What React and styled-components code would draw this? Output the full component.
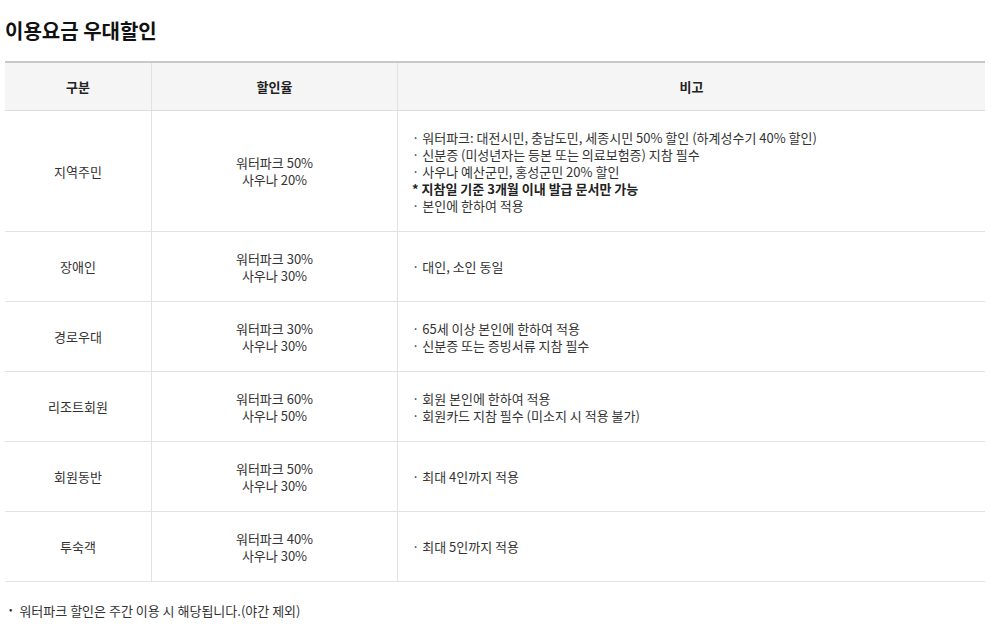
import React from "react";
import styled, { createGlobalStyle } from "styled-components";

const Global = createGlobalStyle`
  html, body { margin:0; padding:0; background:#fff; }
  body { font-family: "Noto Sans CJK KR", "Noto Sans", sans-serif; color:#333; }
`;

const Page = styled.div`
  padding: 15px 6px 0 5px;
`;

const Title = styled.h2`
  margin: 0 0 14px 0;
  font-size: 20px;
  font-weight: 700;
  color: #111;
  line-height: 32px;
`;

const Table = styled.table`
  width: 980px;
  border-collapse: collapse;
  border-top: 2px solid #c8c8c8;
  font-size: 13px;
  line-height: 17px;
`;

const Th = styled.th`
  background: #f5f5f5;
  height: 47px;
  font-weight: 700;
  color: #222;
  border-bottom: 1px solid #ddd;
  border-left: ${(p) => (p.first ? "none" : "1px solid #e2e2e2")};
  width: ${(p) => p.w || "auto"};
  padding: 0;
`;

const Td = styled.td`
  text-align: ${(p) => (p.left ? "left" : "center")};
  padding: ${(p) => (p.left ? "17.5px 14px" : "17.5px 0")};
  border-bottom: 1px solid #e2e2e2;
  border-left: ${(p) => (p.first ? "none" : "1px solid #e2e2e2")};
  color: #333;
  vertical-align: middle;
`;

const Line = styled.div`
  font-weight: ${(p) => (p.bold ? 700 : 400)};
  color: ${(p) => (p.bold ? "#222" : "#333")};
`;

const Note = styled.p`
  margin: 19px 0 0 4px;
  font-size: 13px;
  color: #333;
  display: flex;
  gap: 7px;
`;

const Dot = styled.span`
  font-size: 10px;
`;

const rows = [
  {
    name: "지역주민",
    rate: ["워터파크 50%", "사우나 20%"],
    notes: [
      ["· 워터파크: 대전시민, 충남도민, 세종시민 50% 할인 (하계성수기 40% 할인)"],
      ["· 신분증 (미성년자는 등본 또는 의료보험증) 지참 필수"],
      ["· 사우나 예산군민, 홍성군민 20% 할인"],
      ["* 지참일 기준 3개월 이내 발급 문서만 가능", true],
      ["· 본인에 한하여 적용"],
    ],
  },
  { name: "장애인", rate: ["워터파크 30%", "사우나 30%"], notes: [["· 대인, 소인 동일"]] },
  {
    name: "경로우대",
    rate: ["워터파크 30%", "사우나 30%"],
    notes: [["· 65세 이상 본인에 한하여 적용"], ["· 신분증 또는 증빙서류 지참 필수"]],
  },
  {
    name: "리조트회원",
    rate: ["워터파크 60%", "사우나 50%"],
    notes: [["· 회원 본인에 한하여 적용"], ["· 회원카드 지참 필수 (미소지 시 적용 불가)"]],
  },
  { name: "회원동반", rate: ["워터파크 50%", "사우나 30%"], notes: [["· 최대 4인까지 적용"]] },
  { name: "투숙객", rate: ["워터파크 40%", "사우나 30%"], notes: [["· 최대 5인까지 적용"]] },
];

export default function App() {
  return (
    <Page>
      <Global />
      <Title>이용요금 우대할인</Title>
      <Table>
        <thead>
          <tr>
            <Th first w="146px">구분</Th>
            <Th w="245px">할인율</Th>
            <Th>비고</Th>
          </tr>
        </thead>
        <tbody>
          {rows.map((r) => (
            <tr key={r.name}>
              <Td first>{r.name}</Td>
              <Td>
                {r.rate.map((t) => (
                  <Line key={t}>{t}</Line>
                ))}
              </Td>
              <Td left>
                {r.notes.map(([t, b]) => (
                  <Line key={t} bold={b}>{t}</Line>
                ))}
              </Td>
            </tr>
          ))}
        </tbody>
      </Table>
      <Note>
        <Dot>•</Dot>
        <span>워터파크 할인은 주간 이용 시 해당됩니다.(야간 제외)</span>
      </Note>
    </Page>
  );
}
